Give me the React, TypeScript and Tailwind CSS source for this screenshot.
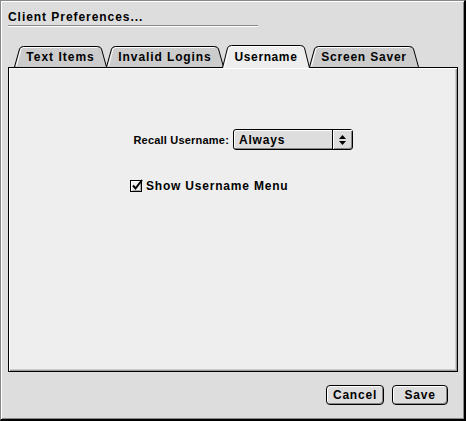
import React from "react";

const font = { fontFamily: '"Liberation Sans", Arial, sans-serif' };

function Tab({ label, w, selected, ml, track }: { label: string; w: number; selected?: boolean; ml: number; track: string }) {
  const H = selected ? 23 : 21;
  const stroke = `M0.5,${H} L5.5,3 Q6.5,0.5 9.5,0.5 L${w - 9.5},0.5 Q${w - 6.5},0.5 ${w - 5.5},3 L${w - 0.5},${H}`;
  const hl = `M2.5,${H - 1} L7,3 Q8,1.5 10,1.5 L${w - 10},1.5`;
  return (
    <div
      className={`relative flex items-center justify-center shrink-0 ${selected ? "z-10 -mb-px" : ""}`}
      style={{ width: w, height: H, marginLeft: ml }}
    >
      <svg className="absolute inset-0" width={w} height={H}>
        <path d={stroke + " Z"} fill={selected ? "#eeeeee" : "#cccccc"} stroke="none" />
        <path d={hl} fill="none" stroke="#ffffff" strokeWidth="1" />
        <path d={stroke} fill="none" stroke="#000" strokeWidth="1" />
      </svg>
      <span className={`relative text-[12px] font-bold leading-[14px] text-black ${track}`} style={font}>
        {label}
      </span>
    </div>
  );
}

function Button({ label, w }: { label: string; w: number }) {
  return (
    <div
      className="flex items-center justify-center h-[20px] rounded-[4px] border border-black bg-[#dddddd] shadow-[inset_1px_1px_0_#ffffff,inset_-1px_-1px_0_#888888]"
      style={{ width: w }}
    >
      <span className="text-[12px] font-bold leading-[14px] tracking-[0.8px] text-black" style={font}>
        {label}
      </span>
    </div>
  );
}

export default function App() {
  return (
    <div
      className="w-[466px] h-[421px] bg-[#dddddd] border-t border-l border-t-[#888888] border-l-[#888888] border-r-2 border-b-2 border-r-black border-b-black shadow-[inset_1px_1px_0_#ffffff,inset_-1px_-1px_0_#888888] flex flex-col"
      style={font}
    >
      <div className="pt-[9px] pl-[7px]">
        <div className="text-[12px] font-bold leading-[14px] tracking-[0.95px] text-black">Client Preferences...</div>
      </div>
      <div className="mt-px ml-[7px] w-[250px] h-[2px] border-t border-t-[#888888] border-b border-b-white" />
      <div className="mt-[18px] h-[22px] flex items-end pl-[13px]">
        <Tab label="Text Items" w={93} ml={0} track="tracking-[1px]" />
        <Tab label="Invalid Logins" w={118} ml={-1} track="tracking-[0.9px]" />
        <Tab label="Username" w={88} ml={-2} selected track="tracking-[0.6px]" />
        <Tab label="Screen Saver" w={110} ml={-1} track="tracking-[0.8px]" />
      </div>
      <div className="ml-[7px] w-[450px] h-[305px] border border-black bg-[#eeeeee] shadow-[inset_1px_1px_0_#ffffff,inset_-1px_-1px_0_#999999,inset_-2px_-2px_0_#cccccc] pl-[100px] pt-[61px] flex flex-col">
        <div className="flex items-center">
          <div className="w-[120px] text-right text-[11px] font-bold leading-[14px] tracking-[0.2px] text-black">Recall Username:</div>
          <div className="ml-[4px] w-[120px] h-[21px] rounded-[3px] border border-black bg-[#dddddd] shadow-[inset_1px_1px_0_#ffffff,inset_-1px_-1px_0_#888888] flex">
            <div className="flex-1 flex items-center pl-[5px] text-[12px] font-bold leading-[14px] tracking-[0.8px] text-black">Always</div>
            <div className="w-[20px] border-l border-l-black flex items-center justify-center shadow-[inset_1px_1px_0_#ffffff]">
              <svg width="7" height="10" viewBox="0 0 7 10">
                <path d="M3.5,0 L7,4 L0,4 Z" fill="#000" />
                <path d="M0,6 L7,6 L3.5,10 Z" fill="#000" />
              </svg>
            </div>
          </div>
        </div>
        <div className="mt-[29px] ml-[21px] flex items-center">
          <svg width="15" height="14" viewBox="0 0 15 14" className="shrink-0">
            <rect x="0.5" y="1.5" width="11" height="11" fill="#eeeeee" stroke="#000" />
            <path d="M1.5,11.5 V2.5 H10.5" fill="none" stroke="#ffffff" />
            <path d="M2.5,11.5 H10.5 V3.5" fill="none" stroke="#aaaaaa" />
            <path d="M3,6.5 L5.5,9.5 L12,1" fill="none" stroke="#000" strokeWidth="2" />
          </svg>
          <span className="ml-[1px] text-[12px] font-bold leading-[14px] tracking-[0.8px] text-black">Show Username Menu</span>
        </div>
      </div>
      <div className="mt-[13px] flex justify-end pr-[16px] gap-[8px]">
        <Button label="Cancel" w={58} />
        <Button label="Save" w={56} />
      </div>
    </div>
  );
}
